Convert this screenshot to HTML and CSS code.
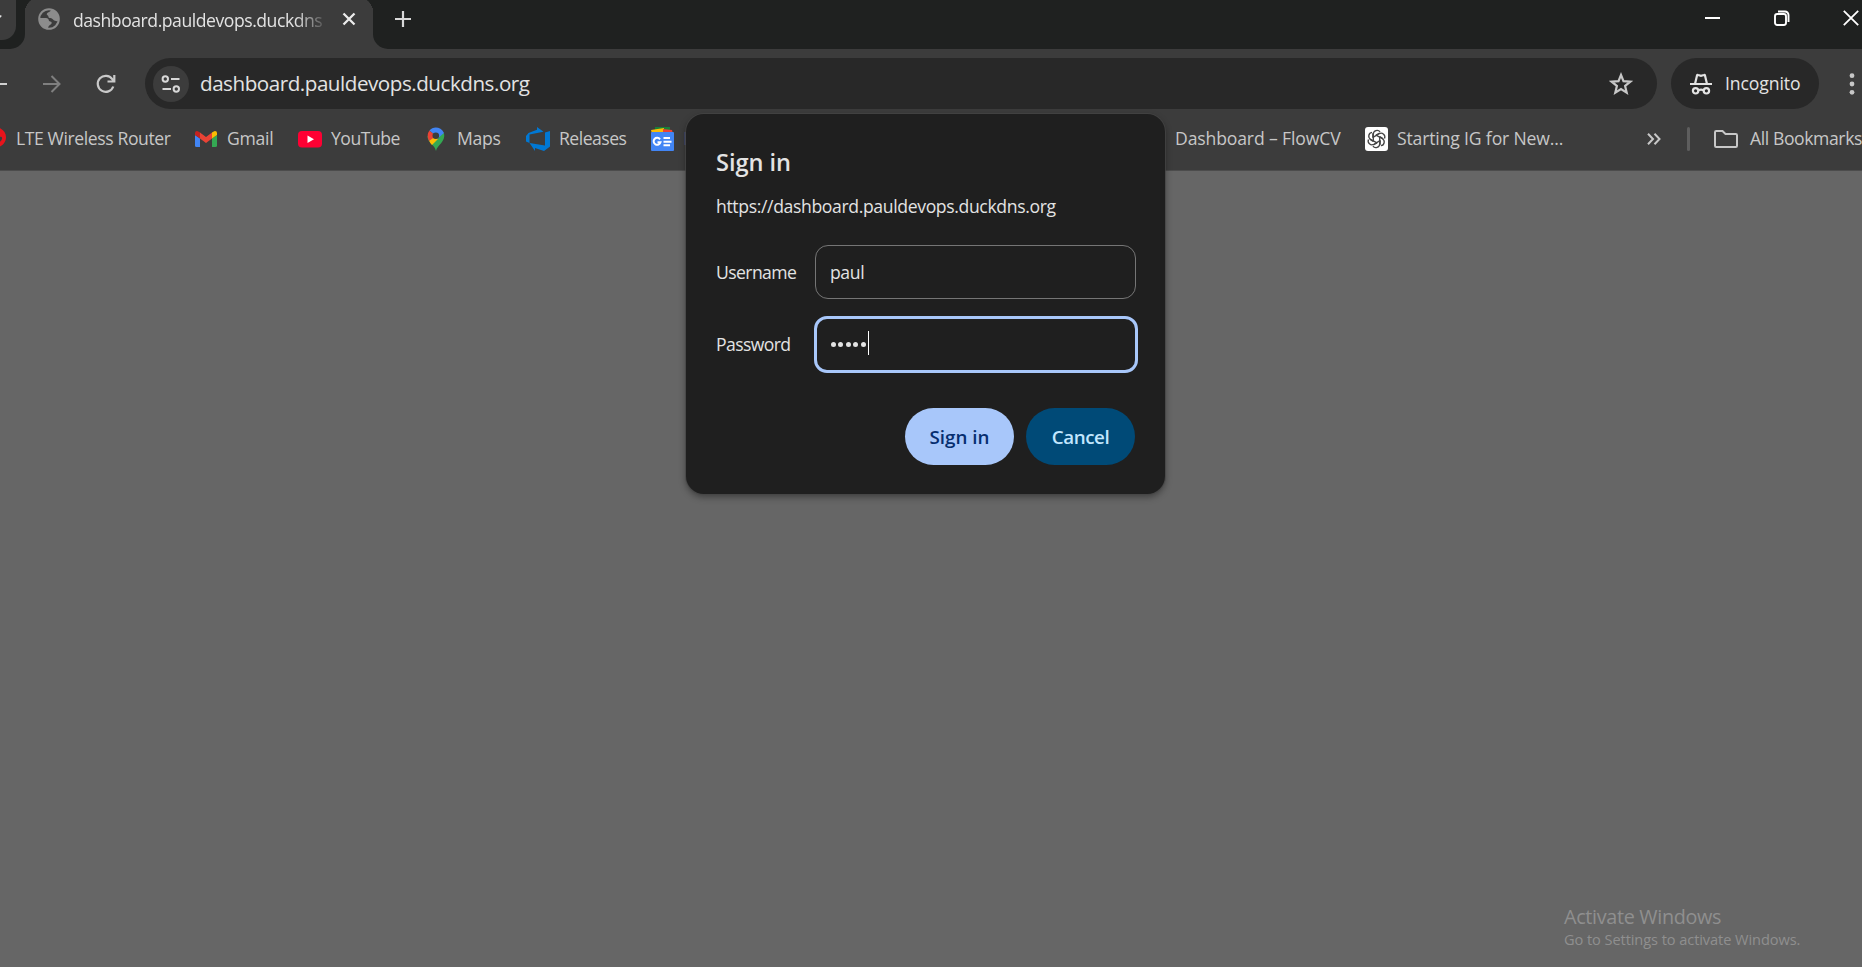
FILE: index.html
```html
<!DOCTYPE html>
<html lang="en">
<head>
<meta charset="utf-8">
<title>dashboard.pauldevops.duckdns.org</title>
<link rel="stylesheet" href="styles.css">
</head>
<body>
<header class="browser">
  <div class="tabstrip">
    <div class="strip-start"><div class="tab-search"><svg width="3" height="6" viewBox="0 0 3 6"><path d="M-1 5 1.200 2.500" stroke="#e3e3e3" stroke-width="1.600"/></svg></div></div>
    <div class="tab">
      <svg class="globe" width="22" height="22" viewBox="0 0 22 22"><circle cx="11" cy="11" r="9.800" fill="#3c3c3c" stroke="#8c8c8c" stroke-width="2"/><path d="M13 1.500C13 4 10.500 3.500 9 5.500C8 7 10.500 7 10.500 9C10.500 10.500 14 9.500 15 11.500C16 13 17.500 12.500 19.500 13.500C20.500 12 20.800 10 20.500 8C19 4 16 2 13 1.500ZM1.500 10H8C10 10 11 11.500 11 13L13.500 14C14.500 17 10.500 16 10 20.500C5 20.500 1.500 16 1.500 10Z" fill="#8c8c8c"/></svg>
      <span class="tab-title">dashboard.pauldevops.duckdns</span>
      <svg class="tab-close" width="14" height="14" viewBox="0 0 14 14"><path d="M1.500 1.500 12.500 12.500M12.500 1.500 1.500 12.500" stroke="#ececec" stroke-width="2.300"/></svg>
    </div>
    <div class="strip-rest">
      <svg class="new-tab" width="16" height="16" viewBox="0 0 16 16"><path d="M8 0V16M0 8H16" stroke="#d8d8d8" stroke-width="2.200"/></svg>
      <div class="window-controls">
        <svg width="16" height="16" viewBox="0 0 16 16"><path d="M0 8H15" stroke="#fff" stroke-width="2"/></svg>
        <svg width="16" height="16" viewBox="0 0 16 16" fill="none" stroke="#fff" stroke-width="1.900"><rect x="1" y="4" width="11" height="11" rx="2.200"/><path d="M4 1.500H11A3.500 3.500 0 0 1 14.500 5V12"/></svg>
        <svg width="16" height="16" viewBox="0 0 16 16"><path d="M.8.8 15.200 15.200M15.200.8.8 15.200" stroke="#fff" stroke-width="1.800"/></svg>
      </div>
    </div>
  </div>
  <div class="toolbar">
    <svg class="back" width="8" height="20" viewBox="0 0 8 20"><path d="M0 10H7" stroke="#d0d0d0" stroke-width="2"/></svg>
    <svg class="forward" width="18" height="18" viewBox="0 0 18 18" fill="none" stroke="#7f7f7f" stroke-width="2"><path d="M0 9H16.500M8.500 1 16.500 9 8.500 17"/></svg>
    <svg class="reload" width="20" height="20" viewBox="0 0 20 20" fill="none" stroke="#c9c9c9" stroke-width="2.200"><path d="M17.300 12.500A8 8 0 1 1 16.300 5.200L18 7M18.300 1V7.500H11.500"/></svg>
    <div class="omnibox">
      <span class="site-info"><svg width="20" height="20" viewBox="0 0 20 20" fill="none" stroke="#d8d8d8" stroke-width="2"><circle cx="4.300" cy="5" r="2.700"/><path d="M10 5H18.500M1.500 15H10"/><circle cx="15.300" cy="15" r="2.700"/></svg></span>
      <span class="url">dashboard.pauldevops.duckdns.org</span>
      <svg class="star" width="24" height="24" viewBox="0 0 24 24" fill="none" stroke="#c7c7c7" stroke-width="2.200"><path d="M12 3 14.500 9.100 21.300 9.700 16.100 14 17.700 20.700 12 17.100 6.300 20.700 7.900 14 2.700 9.700 9.500 9.100Z"/></svg>
    </div>
    <div class="incognito">
      <svg width="22" height="22" viewBox="0 0 22 22" fill="none" stroke="#e3e3e3" stroke-width="2.200"><path d="M0 11H22M5 11 7 2.500Q7.300 1.700 8.100 2L11 2.800 13.900 2Q14.700 1.700 15 2.500L17 11M8.500 17.200Q11 16 13.500 17.200"/><circle cx="5.600" cy="17.800" r="2.700"/><circle cx="16.400" cy="17.800" r="2.700"/></svg>
      <span>Incognito</span>
    </div>
    <svg class="menu" width="6" height="22" viewBox="0 0 6 22" fill="#c7c7c7"><circle cx="3" cy="2.700" r="2.400"/><circle cx="3" cy="11" r="2.400"/><circle cx="3" cy="19.300" r="2.400"/></svg>
  </div>
  <nav class="bookmarks">
    <a class="bm bm-router"><svg width="24" height="24" viewBox="0 0 24 24"><path d="M12 0C20 0 24 5 24 10C24 16 20 19 15 21Q12 18 13 14L20 8 12 3Z" fill="#e8141c"/><path d="M12 1H18L21 9 18 12Z" fill="#e8141c"/><path d="M17.500 10Q20.500 9 20 12 19 14.500 17.500 15Z" fill="#3c3c3c"/></svg><span>LTE Wireless Router</span></a>
    <a class="bm bm-gmail"><svg width="24" height="24" viewBox="0 0 24 24"><path d="M1 8 6 11.500V20H2.500Q1 20 1 18.500Z" fill="#4285f4"/><path d="M23 8 18 11.500V20H21.500Q23 20 23 18.500Z" fill="#34a853"/><path d="M6 5.500 12 10 18 5.500V11.500L12 16 6 11.500Z" fill="#ea4335"/><path d="M1 8V6Q1 4 3 4 4 4 6 5.500V11.500Z" fill="#c5221f"/><path d="M23 8V6Q23 4 21 4 20 4 18 5.500V11.500Z" fill="#fbbc04"/></svg><span>Gmail</span></a>
    <a class="bm bm-youtube"><svg width="24" height="24" viewBox="0 0 24 24"><rect y="4" width="24" height="16.500" rx="4" fill="#ff0033"/><path d="M9.500 8.500 16 12.200 9.500 16Z" fill="#fff"/></svg><span>YouTube</span></a>
    <a class="bm bm-maps"><svg width="24" height="24" viewBox="0 0 24 24"><path d="M12 24C11 18 3.500 16 3.500 9L12 9 20 6C22 15 13 18 12 24Z" fill="#34a853"/><path d="M5 13.500 14 6V12L8 18Q6 16 5 13.500Z" fill="#fbbc04"/><path d="M5.500 3.500 12 9 5 14Q2 8 5.500 3.500Z" fill="#ea4335"/><path d="M5.500 3.500C9-1 17-.5 20 6L13 12 11 8Z" fill="#4285f4"/><circle cx="11.800" cy="8.700" r="3.300" fill="#3c3c3c"/></svg><span>Maps</span></a>
    <a class="bm bm-releases"><svg width="24" height="24" viewBox="0 0 24 24"><path d="M0 9 2.500 6 11 2.700V0L17.500 4.800 3.500 7.500V16L0 14.500ZM24 4V19.500L18 24 9 21V24L3.500 16 19 18.500V5.500Z" fill="#0078d4"/></svg><span>Releases</span></a>
    <a class="bm bm-news"><svg width="24" height="24" viewBox="0 0 24 24"><path d="M4 0H19V6H4Z" fill="#188038"/><path d="M0 3 13 1V7H1Z" fill="#fbbc04"/><path d="M12 2 21 3 22 7H12Z" fill="#ea4335"/><rect y="5" width="23" height="19" rx="1" fill="#4285f4"/><path d="M9 12.300A3.500 3.500 0 1 0 9.500 15.300H6.500M12.500 11H19M12.500 14.700H20.500M12.500 18.300H19" fill="none" stroke="#fff" stroke-width="2"/></svg><span class="clipped">L</span></a>
    <a class="bm bm-flow"><span class="empty-icon"></span><span>Dashboard – FlowCV</span></a>
    <a class="bm bm-gpt"><svg width="24" height="24" viewBox="0 0 24 24"><rect x="1" width="23" height="24" rx="3" fill="#fff"/><g fill="none" stroke="#444" stroke-width="1.300" transform="translate(12.500 12)"><g id="petal"><path d="M-3.200 1.800V-5A3.800 3.800 0 0 1 3.600-7.200M3.200-6-.2-4.200V-3"/></g><use href="#petal" transform="rotate(60)"/><use href="#petal" transform="rotate(120)"/><use href="#petal" transform="rotate(180)"/><use href="#petal" transform="rotate(240)"/><use href="#petal" transform="rotate(300)"/></g></svg><span>Starting IG for New...</span></a>
    <svg class="overflow" width="14" height="12" viewBox="0 0 14 12" fill="none" stroke="#c7c7c7" stroke-width="2"><path d="M1 .8 6 6 1 11.200M7.500.8 12.500 6 7.500 11.200"/></svg>
    <span class="divider"></span>
    <a class="bm bm-all"><svg width="24" height="18" viewBox="0 0 24 18" fill="none" stroke="#c7c7c7" stroke-width="2"><path d="M1 2.200Q1 1 2.200 1H8.500L11.500 4H21.800Q23 4 23 5.200V15.800Q23 17 21.800 17H2.200Q1 17 1 15.800Z"/></svg><span>All Bookmarks</span></a>
  </nav>
</header>
<main class="page">
  <div class="watermark"><p class="wm-title">Activate Windows</p><p class="wm-text">Go to Settings to activate Windows.</p></div>
</main>
<section class="dialog">
  <h1>Sign in</h1>
  <p class="origin">https://dashboard.pauldevops.duckdns.org</p>
  <div class="field"><span class="label">Username</span><div class="input"><span class="value">paul</span></div></div>
  <div class="field"><span class="label">Password</span><div class="input focused"><span class="dots"><i></i><i></i><i></i><i></i><i></i></span><span class="caret"></span></div></div>
  <div class="actions"><button class="primary">Sign in</button><button class="secondary">Cancel</button></div>
</section>
</body>
</html>
```
FILE: styles.css
```css
* { box-sizing: border-box; }
body { margin: 0; width: 1862px; height: 967px; overflow: hidden; display: flex; flex-direction: column; background: #666; color: #e3e3e3; font-family: "Open Sans", "Noto Sans", sans-serif; font-size: 17.6px; letter-spacing: -.34px; position: relative; }
svg { display: block; flex: none; }
p, h1 { margin: 0; }
span { white-space: nowrap; }

.browser { height: 171px; background: #3c3c3c; border-bottom: 1px solid #4c4c4c; flex: none; overflow: hidden; }
.tabstrip { height: 49px; display: flex; background: #3c3c3c; }
.strip-start { width: 25px; background: #1f2120; border-bottom-right-radius: 15px; }
.tab-search { width: 16px; height: 40px; background: #3c3c3c; border-bottom-right-radius: 14px; padding-top: 13px; }
.tab { width: 348px; display: flex; padding-left: 13px; background: radial-gradient(circle 15px at 15px 12px, #3c3c3c 98%, #1f2120 100%) 0 0 / 9px 8px no-repeat, radial-gradient(circle 15px at -6px 12px, #3c3c3c 98%, #1f2120 100%) 339px 0 / 9px 8px no-repeat; }
.globe { margin-top: 8px; }
.tab-title { width: 250px; margin: 6px 0 0 13px; height: 28px; line-height: 28px; letter-spacing: -.46px; -webkit-mask-image: linear-gradient(90deg, #000 222px, transparent 256px); mask-image: linear-gradient(90deg, #000 222px, transparent 256px); }
.tab-close { margin: 12px 0 0 19px; }
.strip-rest { flex: 1; background: #1f2120; border-bottom-left-radius: 15px; display: flex; justify-content: space-between; padding-left: 22px; }
.new-tab { margin-top: 11px; }
.window-controls { display: flex; gap: 53px; padding-top: 10px; margin-right: 3px; }

.toolbar { height: 69px; display: flex; align-items: center; }
.forward { margin-left: 35px; }
.reload { margin-left: 35px; }
.omnibox { width: 1512px; height: 51px; margin-left: 29px; border-radius: 26px; background: #282828; display: flex; align-items: center; padding: 0 24px 0 8px; }
.site-info { width: 36px; height: 36px; border-radius: 50%; background: #3c3c3c; display: grid; place-items: center; }
.site-info svg { margin-left: -1px; }
.url { margin-left: 11px; padding-bottom: 2px; font-size: 20.6px; letter-spacing: -.46px; flex: 1; }
.incognito { width: 148px; height: 51px; margin-left: 14px; border-radius: 26px; background: #282828; display: flex; align-items: center; gap: 13px; padding-left: 19px; letter-spacing: -.1px; }
.incognito span { padding-bottom: 1px; }
.menu { margin-left: 30px; }

.bookmarks { height: 52px; display: flex; align-items: center; color: #c7c7c7; padding-bottom: 10px; letter-spacing: -.25px; }
.bm { display: flex; align-items: center; gap: 9px; flex: none; }
.bm span { padding-bottom: 2px; }
.empty-icon { width: 24px; height: 24px; }
.bm-router { margin-left: -18px; width: 212px; gap: 10px; letter-spacing: -.4px; }
.bm-gmail { width: 104px; }
.bm-youtube { width: 126px; letter-spacing: -.5px; }
.bm-maps { width: 102px; }
.bm-releases { width: 125px; letter-spacing: -.5px; }
.bm-news { width: 491px; gap: 8px; }
.clipped { width: 8px; overflow: hidden; color: #55597a; }
.bm-flow { width: 222px; letter-spacing: -.14px; }
.bm-gpt { width: 283px; letter-spacing: -.16px; }
.divider { width: 3px; height: 24px; margin-left: 26px; background: #5e5e5e; border-radius: 2px; }
.bm-all { margin-left: 24px; gap: 12px; letter-spacing: -.4px; }

.page { flex: 1; display: flex; justify-content: flex-end; align-items: flex-end; background: #666; }
.watermark { width: 298px; height: 64px; color: #8f8f8f; }
.wm-title { font-size: 19.8px; line-height: 28px; letter-spacing: -.32px; }
.wm-text { font-size: 14.6px; line-height: 16px; letter-spacing: -.08px; }

.dialog { position: absolute; left: 686px; top: 114px; width: 479px; height: 380px; padding: 31px 30px 0; border-radius: 18px; background: #1f1f1f; box-shadow: 0 0 0 1px rgba(70,70,70,.7), 0 3px 7px rgba(0,0,0,.4); }
h1 { font-size: 23.6px; font-weight: 600; line-height: 34px; letter-spacing: -.05px; }
.origin { margin-top: 13px; line-height: 28px; letter-spacing: -.36px; }
.field { display: flex; align-items: center; height: 54px; margin-top: 25px; }
.field + .field { margin-top: 18px; }
.label { flex: 0 0 99px; letter-spacing: -.6px; }
.input { flex: 0 0 321px; height: 54px; border: 1px solid #757575; border-radius: 13px; padding-left: 14px; display: flex; align-items: center; }
.value { letter-spacing: -.4px; padding-bottom: 1px; }
.focused { height: 57px; flex-basis: 324px; margin-left: -1px; border: 3px solid #a8c7fa; }
.dots { display: flex; gap: 2.400px; }
.dots i { width: 5px; height: 5px; border-radius: 50%; background: #e3e3e3; }
.caret { width: 1px; height: 24px; margin: -3px 0 0 2px; background: #fff; }
.actions { display: flex; justify-content: flex-end; gap: 12px; margin-top: 37px; }
button { width: 109px; height: 57px; padding: 0; border: 0; border-radius: 29px; font: 600 18.8px "Open Sans", "Noto Sans", sans-serif; }
.primary { background: #a8c7fa; color: #062e6f; }
.secondary { background: #004a77; color: #c2e7ff; letter-spacing: -.4px; }
```
